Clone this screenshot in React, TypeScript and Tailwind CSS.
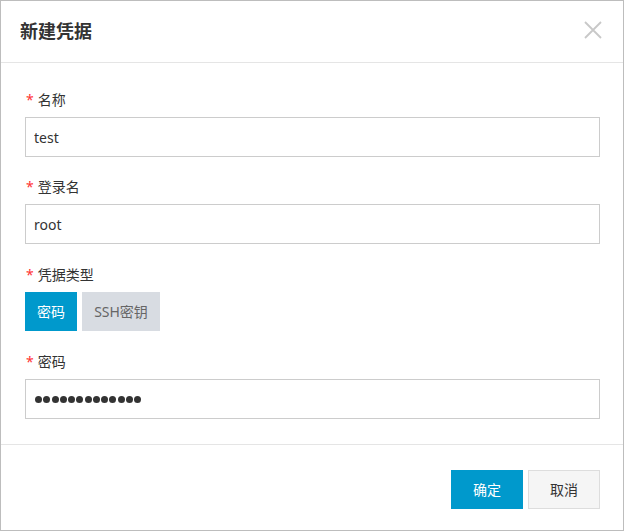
import React from "react";

const font = { fontFamily: '"Noto Sans", "Noto Sans CJK SC", sans-serif' };

function Label({ text }: { text: string }) {
  return (
    <div className="flex h-[20px] items-center text-[14px] leading-[20px] text-[#333]">
      <span className="mr-[4px] ml-[1px] text-[14px] text-[#f33]">*</span>
      <span>{text}</span>
    </div>
  );
}

function TextInput({ value }: { value: string }) {
  return (
    <input
      readOnly
      type="text"
      value={value}
      style={font}
      className="mt-[7px] box-border block h-[40px] w-[575px] border border-[#ccc] bg-white px-[8px] text-[14px] text-[#333] outline-none"
    />
  );
}

const dots = Array.from({ length: 13 }, (_, i) => i);

export default function App() {
  return (
    <div style={font} className="h-[532px] w-[624px] bg-white">
      <div className="box-border flex h-[531px] w-[624px] flex-col border border-[#bdbdbd] bg-white">
        <div className="flex h-[62px] shrink-0 items-center justify-between border-b border-[#e5e5e5] pl-[19px] pr-[20px]">
          <div className="text-[18px] font-bold text-[#333]">新建凭据</div>
          <svg width="20" height="20" viewBox="0 0 20 20" className="mt-[-4px]">
            <path d="M2 2 L18 18 M18 2 L2 18" stroke="#c8c8c8" strokeWidth="1.8" fill="none" />
          </svg>
        </div>
        <div className="flex shrink-0 flex-col pl-[24px] pt-[27px] pb-[25px]">
          <div className="mb-[20px]">
            <Label text="名称" />
            <TextInput value="test" />
          </div>
          <div className="mb-[21px]">
            <Label text="登录名" />
            <TextInput value="root" />
          </div>
          <div className="mb-[21px]">
            <Label text="凭据类型" />
            <div className="mt-[7px] flex gap-[5px]">
              <div className="flex h-[39px] w-[52px] items-center justify-center bg-[#0099cc] text-[14px] text-white">
                密码
              </div>
              <div className="flex h-[39px] w-[78px] items-center justify-center bg-[#d8dce2] text-[14px] text-[#666]">
                SSH密钥
              </div>
            </div>
          </div>
          <div>
            <Label text="密码" />
            <div className="mt-[7px] box-border flex h-[40px] w-[575px] items-center gap-[1.25px] border border-[#ccc] bg-white px-[9px]">
              {dots.map((i) => (
                <span key={i} className="block h-[7px] w-[7px] rounded-full bg-[#333]" />
              ))}
            </div>
          </div>
        </div>
        <div className="flex flex-1 items-start justify-end gap-[5px] border-t border-[#e5e5e5] pr-[23px] pt-[25px]">
          <button className="h-[39px] w-[72px] bg-[#0099cc] text-[14px] text-white">确定</button>
          <button className="box-border h-[39px] w-[72px] border border-[#ddd] bg-[#f5f5f5] text-[14px] text-[#333]">
            取消
          </button>
        </div>
      </div>
    </div>
  );
}
